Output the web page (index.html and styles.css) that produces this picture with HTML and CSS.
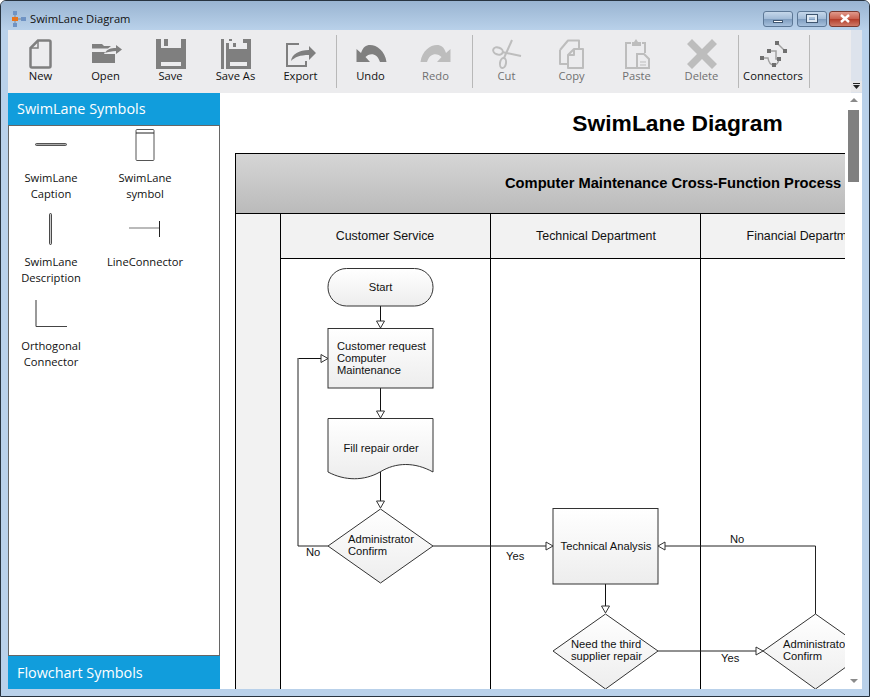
FILE: index.html
```html
<!DOCTYPE html>
<html lang="en">
<head>
    <meta charset="UTF-8">
    <meta name="viewport" content="width=device-width, initial-scale=1.0">
    <title>SwimLane Diagram</title>
    <link rel="stylesheet" href="styles.css">
</head>
<body>
<div class="window">
    <div class="titlebar">
        <svg class="app-icon" viewBox="0 0 14 16">
            <rect x="1" y="0" width="4" height="4" fill="#6f93c4"/>
            <rect x="1" y="12" width="4" height="4" fill="#6f93c4"/>
            <rect x="9" y="6" width="5" height="4" fill="#6f93c4"/>
            <path d="M3 4V12M3 8H9" stroke="#7a8796" fill="none"/>
            <rect x="0" y="6" width="6" height="4" fill="#e8741c"/>
        </svg>
        <span class="title-text">SwimLane Diagram</span>
        <div class="win-buttons">
            <div class="win-btn min-btn"><span class="min-glyph"></span></div>
            <div class="win-btn"><span class="max-glyph"></span></div>
            <div class="win-btn close-btn">
                <svg viewBox="0 0 12 9" width="12" height="9"><path d="M2 1L10 8M10 1L2 8" stroke="#fff" stroke-width="2.4"/></svg>
            </div>
        </div>
    </div>

    <div class="toolbar">
        <div class="tools">
            <div class="tool">
                <svg viewBox="0 0 30 30"><path d="M12 1.500H23Q24.500 1.500 24.500 3V27Q24.500 28.500 23 28.500H6Q4.500 28.500 4.500 27V9Z" fill="none" stroke="currentColor" stroke-width="2.500"/><path d="M12 2V9H5" fill="none" stroke="currentColor" stroke-width="1.500"/></svg>
                <span>New</span>
            </div>
            <div class="tool">
                <svg viewBox="0 0 30 30"><path d="M1 5H11L13 7H20L17 9.500H1ZM1 13H14L13 15H24V24H1Z" fill="currentColor"/><path d="M14 14C16 10 20 9 25 9V6L31 10.500L25 15V12C21 12 17 13 14 14Z" fill="currentColor"/></svg>
                <span>Open</span>
            </div>
            <div class="tool">
                <svg viewBox="0 0 30 30"><path fill-rule="evenodd" d="M0 0H5V9H25V0H30V30H0ZM5 23V27H25V23ZM8 0H12V7H8Z" fill="currentColor"/></svg>
                <span>Save</span>
            </div>
            <div class="tool">
                <svg viewBox="0 0 30 30"><path fill-rule="evenodd" d="M0 0H3V30H0ZM5 4H8V10H26V0H30V30H5ZM9 23V27H26V23ZM8 0H11V2H8ZM22 0H26V4H22ZM12 4H15V8H12Z" fill="currentColor"/></svg>
                <span>Save As</span>
            </div>
            <div class="tool">
                <svg viewBox="0 0 30 30"><path d="M13 5H1V27H20V22" fill="none" stroke="currentColor" stroke-width="2"/><path d="M5 22C6 15 13 11 23 11V7L30 14L23 21V16C14 16 9 18 5 22Z" fill="currentColor"/></svg>
                <span>Export</span>
            </div>
            <div class="tool-sep"></div>
            <div class="tool">
                <svg viewBox="0 0 30 30"><path d="M0.500 10V23H14L9.500 18C13 14 21 13 24 23H30.500C29 12 21 6 14 6C10 6 7 8 5 14Z" fill="currentColor"/></svg>
                <span>Undo</span>
            </div>
            <div class="tool off">
                <svg viewBox="0 0 30 30"><path transform="translate(30) scale(-1 1)" d="M0.500 10V23H14L9.500 18C13 14 21 13 24 23H30.500C29 12 21 6 14 6C10 6 7 8 5 14Z" fill="currentColor"/></svg>
                <span>Redo</span>
            </div>
            <div class="tool-sep wide"></div>
            <div class="tool off">
                <svg viewBox="0 0 30 30"><g fill="none" stroke="currentColor" stroke-width="2"><path d="M20 1L12 19"/><path d="M10 13L29 17"/><ellipse cx="6" cy="12" rx="5" ry="3.500" transform="rotate(20 6 12)"/><ellipse cx="11" cy="24" rx="3" ry="5" transform="rotate(10 11 24)"/></g></svg>
                <span>Cut</span>
            </div>
            <div class="tool off">
                <svg viewBox="0 0 30 30"><g fill="none" stroke="currentColor" stroke-width="2" stroke-linejoin="round"><path d="M3 11L11 1.500H22V9"/><path d="M3 11V25H10"/><path d="M17 10H26V29H11V16Z"/><path d="M17 10V16H11"/></g></svg>
                <span>Copy</span>
            </div>
            <div class="tool off">
                <svg viewBox="0 0 30 30"><g fill="none" stroke="currentColor" stroke-width="2"><path d="M9 4H4V29H14"/><path d="M20 4H23V14"/><path d="M15 15H22L27 20V29H15Z"/><path d="M18 23H24M18 26H24" stroke-width="1"/></g><path d="M10 3H12L14 0L16 3H19V7H10Z" fill="currentColor"/></svg>
                <span>Paste</span>
            </div>
            <div class="tool off">
                <svg viewBox="0 0 30 30"><path d="M5 0L15 10L25 0L30 5L20 15L30 25L25 30L15 20L5 30L0 25L10 15L0 5Z" fill="currentColor"/></svg>
                <span>Delete</span>
            </div>
            <div class="tool-sep wide"></div>
            <div class="tool connectors">
                <svg viewBox="0 0 30 30"><g fill="none" stroke="#a0a0a0" stroke-width="1.500"><path d="M19 4L27 12"/><path d="M11 12H18V20H21"/><path d="M4 19H10Q11 26 16 26Q20 26 21 20"/></g><g fill="#6f6f6f"><rect x="17" y="2" width="4" height="4"/><rect x="25" y="10" width="4" height="4"/><rect x="9" y="10" width="4" height="4"/><rect x="2" y="17" width="4" height="4"/><rect x="19" y="18" width="4" height="4"/><rect x="14" y="24" width="4" height="4"/></g></svg>
                <span>Connectors</span>
            </div>
            <div class="tool-sep"></div>
        </div>
        <div class="overflow">
            <div class="overflow-btn"><svg viewBox="0 0 7 6" width="7" height="6"><path d="M0 0H7V1H0ZM0 2H7L3.500 6Z" fill="#222"/></svg></div>
        </div>
    </div>

    <div class="main">
        <div class="sidebar">
            <div class="panel-head first">SwimLane Symbols</div>
            <div class="symbols">
                <div class="symbol">
                    <svg viewBox="0 0 36 32"><rect x="2.500" y="14.500" width="31" height="2" rx="1" fill="#aaa" stroke="#333" stroke-width="0.800"/></svg>
                    <span>SwimLane<br>Caption</span>
                </div>
                <div class="symbol">
                    <svg viewBox="0 0 36 32"><rect x="9" y="0.500" width="18" height="31" rx="1" fill="#fff" stroke="#555"/><path d="M9 4H27" stroke="#222"/></svg>
                    <span>SwimLane<br>symbol</span>
                </div>
                <div class="symbol">
                    <svg viewBox="0 0 36 32"><rect x="16.500" y="0.500" width="2" height="31" rx="1" fill="#ccc" stroke="#222" stroke-width="0.800"/></svg>
                    <span>SwimLane<br>Description</span>
                </div>
                <div class="symbol">
                    <svg viewBox="0 0 36 32"><path d="M2 15H32" stroke="#777" stroke-width="1.200"/><path d="M32.500 8V24" stroke="#222"/></svg>
                    <span>LineConnector</span>
                </div>
                <div class="symbol">
                    <svg viewBox="0 0 36 32"><path d="M3 3V29.500" stroke="#777" stroke-width="1.500" fill="none"/><path d="M3 29.500H34" stroke="#444" fill="none"/></svg>
                    <span>Orthogonal<br>Connector</span>
                </div>
            </div>
            <div class="panel-head">Flowchart Symbols</div>
        </div>

        <div class="canvas">
            <svg class="diagram" viewBox="220 93 625 596">
                <defs>
                    <linearGradient id="lane-head" x1="0" y1="0" x2="0" y2="1">
                        <stop offset="0" stop-color="#d6d6d6"/>
                        <stop offset="1" stop-color="#bababa"/>
                    </linearGradient>
                    <linearGradient id="shape-fill" x1="0" y1="0" x2="0" y2="1">
                        <stop offset="0" stop-color="#ffffff"/>
                        <stop offset="1" stop-color="#ededed"/>
                    </linearGradient>
                </defs>

                <text class="diagram-title" x="677.500" y="131">SwimLane Diagram</text>

                <!-- lanes -->
                <rect x="235.500" y="153.500" width="700" height="60" fill="url(#lane-head)" stroke="#000"/>
                <rect x="236" y="214" width="700" height="44.500" fill="#f2f2f2"/>
                <rect x="236" y="214" width="44.500" height="480" fill="#f2f2f2"/>
                <path class="lane-line" d="M235.500 213.500V690M280.500 213.500V690M490.500 213.500V690M700.500 213.500V690M280.500 258.500H860"/>
                <text class="lane-title" x="505" y="188">Computer Maintenance Cross-Function Process</text>
                <text class="lane-name" x="385" y="240">Customer Service</text>
                <text class="lane-name" x="596" y="240">Technical Department</text>
                <text class="lane-name" x="805.500" y="240">Financial Department</text>

                <!-- connectors -->
                <path class="wire" d="M380.500 306V322M380.500 388V412M380.500 472V503M605.500 584V608M298.500 358.500H322"/>
                <path class="wire thick" d="M328 546H298V358"/>
                <path class="wire thick" d="M433 546H547"/>
                <path class="wire thick" d="M658 651H757"/>
                <path class="wire thick" d="M815.500 614V546H665"/>
                <polygon class="head" points="376.500,321 384.500,321 380.500,328"/>
                <polygon class="head" points="376.500,411 384.500,411 380.500,418"/>
                <polygon class="head" points="376.500,501 384.500,501 380.500,508"/>
                <polygon class="head" points="601.500,606 609.500,606 605.500,613"/>
                <polygon class="head" points="321,354.500 321,362.500 328,358.500"/>
                <polygon class="head" points="546,542 546,550 553,546"/>
                <polygon class="head" points="756,647 756,655 763,651"/>
                <polygon class="head" points="665,542 665,550 658,546"/>

                <!-- shapes -->
                <rect class="shape" x="328" y="268.500" width="105" height="37.500" rx="18.500"/>
                <rect class="shape" x="328" y="328.500" width="105" height="59.500"/>
                <path class="shape" d="M328 418.500H433V472C415 462 396 462 380 472C364 481 345 481 328 472Z"/>
                <polygon class="shape" points="380.500,509 433,546 380.500,583 328,546"/>
                <rect class="shape" x="553" y="508.500" width="105" height="75.500"/>
                <polygon class="shape" points="605.500,614 658,651 605.500,689 553,651"/>
                <polygon class="shape" points="815.500,614 868,651 815.500,689 763,651"/>

                <!-- shape text -->
                <text class="node" text-anchor="middle" x="380.500" y="291">Start</text>
                <text class="node" x="337" y="350">Customer request</text>
                <text class="node" x="337" y="362">Computer</text>
                <text class="node" x="337" y="374">Maintenance</text>
                <text class="node" text-anchor="middle" x="381" y="452">Fill repair order</text>
                <text class="node" x="348" y="543">Administrator</text>
                <text class="node" x="348" y="555">Confirm</text>
                <text class="node" text-anchor="middle" x="606" y="550">Technical Analysis</text>
                <text class="node" x="571" y="648">Need the third</text>
                <text class="node" x="571" y="660">supplier repair</text>
                <text class="node" x="783" y="648">Administrator</text>
                <text class="node" x="783" y="660">Confirm</text>
                <text class="node" x="306" y="556">No</text>
                <text class="node" x="506" y="560">Yes</text>
                <text class="node" x="721" y="662">Yes</text>
                <text class="node" x="730" y="543">No</text>
            </svg>
            <div class="scrollbar">
                <div class="arrow-up"></div>
                <div class="thumb"></div>
                <div class="arrow-down"></div>
            </div>
        </div>
    </div>
</div>
</body>
</html>
```

FILE: styles.css
```css
html, body {
    margin: 0;
    padding: 0;
    background-color: #fff;
}
.window {
    width: 870px;
    height: 697px;
    box-sizing: border-box;
    display: flex;
    flex-direction: column;
    padding: 0 7px 7px 7px;
    border: 1px solid #27333f;
    border-radius: 6px 6px 0 0;
    background-color: #b9d1ea;
    font-family: "Open Sans", sans-serif;
    overflow: hidden;
}
.titlebar {
    height: 29px;
    box-sizing: border-box;
    flex: none;
    display: flex;
    align-items: center;
    margin: 0 -7px;
    padding: 6px 9px 0 3px;
    background: linear-gradient(to bottom, #99b4d1, #b9d1ea);
}
.app-icon {
    width: 14px;
    height: 16px;
    margin-left: 8px;
    margin-right: 4px;
}
.title-text {
    font-size: 11.200px;
    color: #111;
}
.win-buttons {
    margin-left: auto;
    display: flex;
    gap: 2px;
}
.win-btn {
    width: 28px;
    height: 14px;
    border: 1px solid #5d7896;
    border-radius: 3px;
    background: linear-gradient(to bottom, #c5d7ea 0%, #a3bcd8 48%, #7f9dbf 52%, #a6c0dc 100%);
    display: flex;
    align-items: center;
    justify-content: center;
}
.min-btn {
    margin-right: 2px;
}
.min-glyph {
    width: 10px;
    height: 3px;
    margin-top: 5px;
    background-color: #fff;
    border: 1px solid #3f5670;
    box-sizing: border-box;
}
.max-glyph {
    width: 10px;
    height: 7px;
    box-sizing: border-box;
    border: 2px solid #dfe9f3;
    outline: 1px solid #3f5670;
}
.close-btn {
    width: 29px;
    border-color: #7a3a30;
    background: linear-gradient(to bottom, #e09a8c 0%, #c9604e 48%, #b33d2a 52%, #cf7a68 100%);
}

.toolbar {
    height: 63px;
    flex: none;
    display: flex;
}
.tools {
    flex: 1;
    display: flex;
    align-items: center;
    background-color: #ececee;
}
.tool {
    width: 65px;
    height: 63px;
    display: flex;
    flex-direction: column;
    align-items: center;
    padding-top: 9px;
    box-sizing: border-box;
    color: #7f7f7f;
}
.tool svg {
    width: 30px;
    height: 30px;
    overflow: visible;
}
.tool span {
    font-size: 11.200px;
    line-height: 16px;
    margin-top: -1px;
    color: #111;
    white-space: nowrap;
}
.tool.off {
    color: #bdbdbd;
}
.tool.off span {
    color: #707070;
}
.connectors {
    width: 66px;
}
.tool-sep {
    width: 1px;
    height: 53px;
    margin: 0 1px 0 3px;
    background-color: #b8b8b8;
}
.tool-sep.wide {
    margin-left: 4px;
}
.overflow {
    width: 11px;
    display: flex;
    flex-direction: column;
    justify-content: flex-end;
    background-color: #dde3ec;
}
.overflow-btn {
    width: 11px;
    height: 11px;
    margin-bottom: 1px;
    padding-bottom: 2px;
    box-sizing: border-box;
    display: flex;
    align-items: center;
    justify-content: center;
    background-color: #e6e6e8;
}

.main {
    flex: 1;
    min-height: 0;
    display: flex;
}
.sidebar {
    width: 212px;
    flex: none;
    display: flex;
    flex-direction: column;
    background-color: #fff;
}
.panel-head {
    height: 33px;
    flex: none;
    box-sizing: border-box;
    padding-left: 9px;
    line-height: 33px;
    font-size: 14.400px;
    color: #fff;
    background-color: #119ddc;
}
.panel-head.first {
    height: 32px;
    line-height: 31px;
}
.symbols {
    flex: 1;
    display: grid;
    grid-template-columns: 84px 84px;
    grid-auto-rows: 84px;
    column-gap: 10px;
    align-content: start;
    padding-top: 3px;
    border: 1px solid #666;
}
.symbol {
    display: flex;
    flex-direction: column;
    align-items: center;
    font-size: 11.200px;
    line-height: 16px;
    text-align: center;
    color: #111;
}
.symbol svg {
    width: 36px;
    height: 32px;
    margin-bottom: 9px;
}

.canvas {
    flex: 1;
    display: flex;
    background-color: #fff;
}
.diagram {
    width: 625px;
    height: 596px;
    display: block;
    font-family: "Liberation Sans", Arial, sans-serif;
}
.diagram-title {
    font-size: 22.800px;
    font-weight: bold;
    text-anchor: middle;
}
.lane-title {
    font-size: 14.700px;
    font-weight: bold;
}
.lane-name {
    font-size: 12.400px;
    text-anchor: middle;
    fill: #111;
}
.lane-line {
    fill: none;
    stroke: #000;
}
.wire {
    fill: none;
    stroke: #111;
}
.wire.thick {
    stroke: #222;
}
.head {
    fill: #fff;
    stroke: #333;
}
.shape {
    fill: url(#shape-fill);
    stroke: #333;
}
.node {
    font-size: 11.200px;
    fill: #111;
}

.scrollbar {
    width: 17px;
    flex: none;
    display: flex;
    flex-direction: column;
    align-items: center;
    background-color: #fff;
}
.arrow-up {
    margin-top: 5px;
    border-left: 4px solid transparent;
    border-right: 4px solid transparent;
    border-bottom: 4px solid #8a8a8a;
}
.thumb {
    width: 11px;
    height: 72px;
    margin-top: 8px;
    background-color: #808080;
}
.arrow-down {
    margin-top: auto;
    margin-bottom: 6px;
    border-left: 4px solid transparent;
    border-right: 4px solid transparent;
    border-top: 4px solid #8a8a8a;
}
```
